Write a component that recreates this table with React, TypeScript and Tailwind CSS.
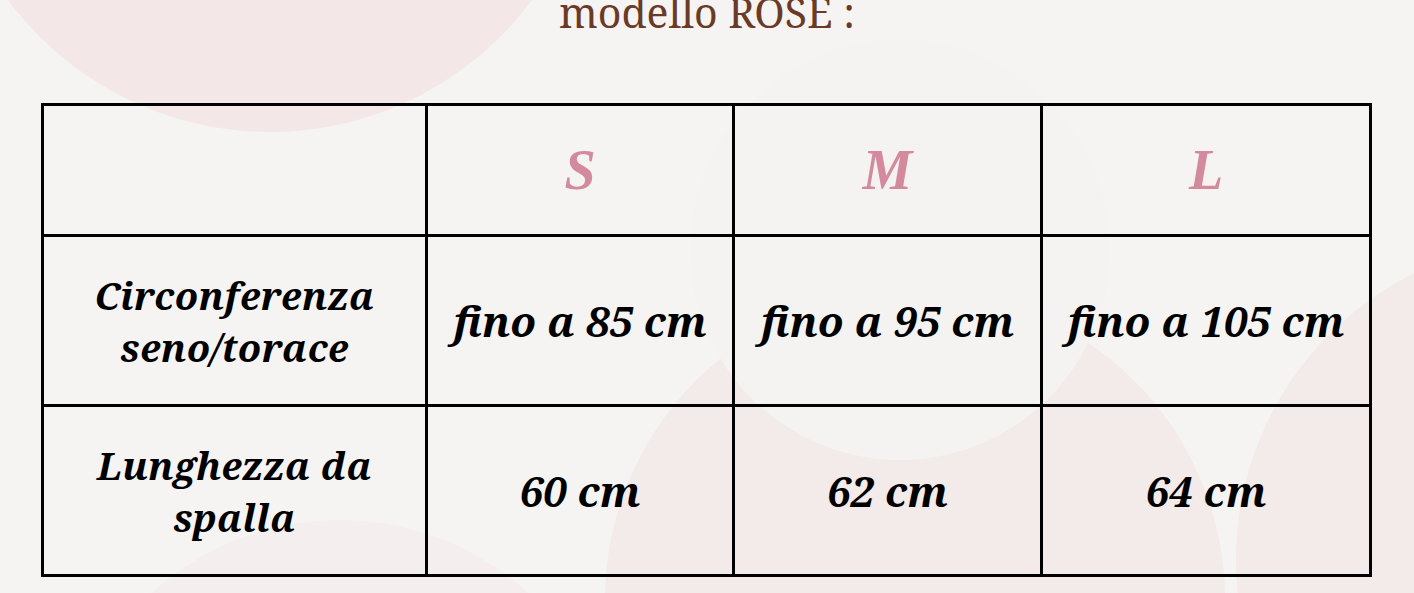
import React from "react";

const serif = { fontFamily: '"Noto Serif", "DejaVu Serif", serif' };

export default function App() {
  const cellBase =
    "border-r-[3px] border-b-[3px] border-black flex items-center justify-center text-center";
  const valCls =
    "font-bold italic text-black text-[42px] leading-[52px] [font-family:'Noto_Serif','DejaVu_Serif',serif]";
  const labCls =
    "font-bold italic text-black text-[38px] leading-[52px] tracking-[0.3px] [font-family:'Noto_Serif','DejaVu_Serif',serif]";
  const headCls =
    "font-bold italic text-[#d38a9d] text-[56px] leading-none [font-family:'Liberation_Serif','Times_New_Roman',serif]";
  return (
    <div className="relative w-[1414px] h-[593px] overflow-hidden bg-[#f5f4f2]">
      {/* decorative background shapes */}
      <div className="absolute left-[-56px] top-[-520px] w-[652px] h-[652px] rounded-full bg-[#f3e8e7]" />
      <div className="absolute left-[605px] top-[290px] w-[620px] h-[620px] rounded-full bg-[#f3eaea]" />
      <div className="absolute left-[690px] top-[40px] w-[420px] h-[420px] rounded-full bg-[#f4f3f1]" />
      <div className="absolute left-[1236px] top-[240px] w-[640px] h-[640px] rounded-full bg-[#f3eaea]" />
      <div className="absolute left-[60px] top-[520px] w-[560px] h-[560px] rounded-full bg-[#f4efee]" />

      <div className="relative flex flex-col">
        <div className="h-[103px] flex justify-center">
          <div
            className="text-[#6b3a26] text-[41px] leading-none mt-[-8px]"
            style={serif}
          >
            modello ROSE :
          </div>
        </div>
        <div className="ml-[41px] w-[1331px] border-l-[3px] border-t-[3px] border-black grid grid-cols-[384px_307px_308px_329px] grid-rows-[131px_170px_170px]">
          <div className={cellBase} />
          <div className={cellBase}>
            <span className={headCls}>S</span>
          </div>
          <div className={cellBase}>
            <span className={headCls}>M</span>
          </div>
          <div className={cellBase}>
            <span className={headCls}>L</span>
          </div>

          <div className={cellBase}>
            <span className={labCls}>
              Circonferenza
              <br />
              seno/torace
            </span>
          </div>
          <div className={cellBase}>
            <span className={valCls}>fino a 85 cm</span>
          </div>
          <div className={cellBase}>
            <span className={valCls}>fino a 95 cm</span>
          </div>
          <div className={cellBase}>
            <span className={valCls}>fino a 105 cm</span>
          </div>

          <div className={cellBase}>
            <span className={labCls}>
              Lunghezza da
              <br />
              spalla
            </span>
          </div>
          <div className={cellBase}>
            <span className={valCls}>60 cm</span>
          </div>
          <div className={cellBase}>
            <span className={valCls}>62 cm</span>
          </div>
          <div className={cellBase}>
            <span className={valCls}>64 cm</span>
          </div>
        </div>
      </div>
    </div>
  );
}
